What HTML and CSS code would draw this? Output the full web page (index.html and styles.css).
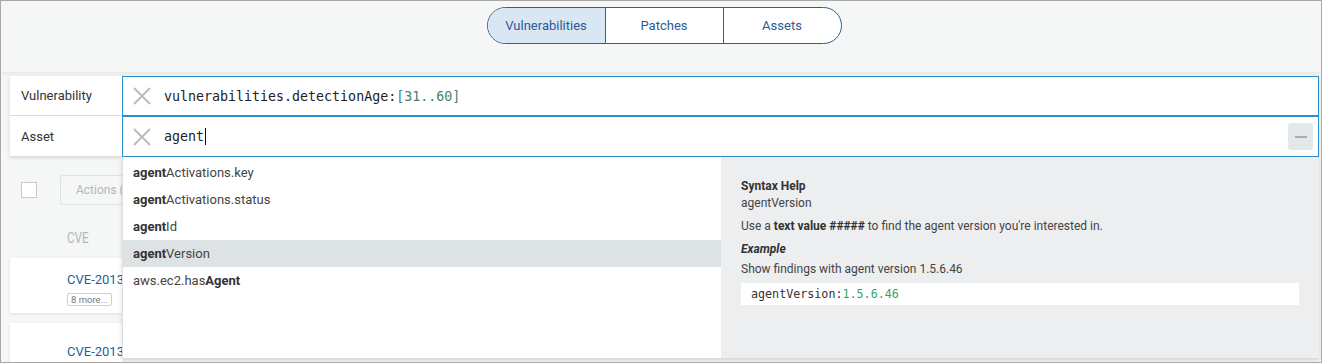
FILE: index.html
```html
<!DOCTYPE html>
<html lang="en">
<head>
    <meta charset="UTF-8">
    <meta name="viewport" content="width=device-width, initial-scale=1.0">
    <title>Vulnerabilities</title>
    <link rel="stylesheet" href="styles.css">
</head>
<body>
    <div class="frame">
        <header class="topbar">
            <nav class="segments">
                <a class="seg active">Vulnerabilities</a>
                <a class="seg">Patches</a>
                <a class="seg">Assets</a>
            </nav>
        </header>

        <section class="search">
            <div class="query-row first">
                <div class="query-label">Vulnerability</div>
                <div class="query-input">
                    <svg class="clear-icon" width="18" height="18" viewBox="0 0 18 18"><path d="M1 1L17 17M17 1L1 17" stroke="#b8bdc1" stroke-width="2" fill="none"/></svg>
                    <span class="code">vulnerabilities.detectionAge:<span class="range">[31..60]</span></span>
                </div>
            </div>
            <div class="query-row">
                <div class="query-label">Asset</div>
                <div class="query-input">
                    <svg class="clear-icon" width="18" height="18" viewBox="0 0 18 18"><path d="M1 1L17 17M17 1L1 17" stroke="#b8bdc1" stroke-width="2" fill="none"/></svg>
                    <span class="code">agent<span class="caret"></span></span>
                    <div class="collapse"><span></span></div>
                </div>
            </div>

            <div class="suggest">
                <ul class="suggest-list">
                    <li><b>agent</b>Activations.key</li>
                    <li><b>agent</b>Activations.status</li>
                    <li><b>agent</b>Id</li>
                    <li class="selected"><b>agent</b>Version</li>
                    <li>aws.ec2.has<b>Agent</b></li>
                </ul>
                <div class="syntax-help">
                    <div class="help-title">Syntax Help</div>
                    <div class="help-field">agentVersion</div>
                    <p class="help-text">Use a <b>text value #####</b> to find the agent version you're interested in.</p>
                    <div class="help-example">Example</div>
                    <p class="help-text tight">Show findings with agent version 1.5.6.46</p>
                    <div class="help-code">agentVersion:<span class="num">1.5.6.46</span></div>
                </div>
            </div>
        </section>

        <main class="results">
            <div class="toolbar">
                <span class="checkbox"></span>
                <div class="actions-btn">Actions (0)</div>
            </div>
            <div class="col-head">CVE</div>
            <div class="card">
                <a class="cve-link">CVE-2013-0001</a>
                <span class="more-tag">8 more...</span>
            </div>
            <div class="card">
                <a class="cve-link">CVE-2013-0002</a>
            </div>
        </main>
    </div>
</body>
</html>
```

FILE: styles.css
```css
body {
    margin: 0;
    font-family: Roboto, "Noto Sans", Arial, sans-serif;
    color: #333;
}
.frame {
    box-sizing: border-box;
    width: 1322px;
    height: 363px;
    border: 1px solid #a8a8a8;
    background: #f5f6f6;
    overflow: hidden;
}
.topbar {
    height: 71px;
    display: flex;
    justify-content: center;
    align-items: flex-start;
    box-shadow: 0 2px 3px rgba(0, 0, 0, 0.06);
}
.segments {
    display: flex;
    margin-top: 6px;
    margin-left: 6px;
    border: 1.5px solid #2e5f98;
    border-radius: 20px;
    overflow: hidden;
    background: #fff;
}
.seg {
    width: 117px;
    height: 35px;
    line-height: 35px;
    text-align: center;
    font-size: 13px;
    color: #2b5b94;
    border-left: 1.5px solid #2e5f98;
}
.seg:first-child {
    border-left: none;
}
.seg.active {
    background: #d9e6f4;
}

/* search box */
.search {
    position: relative;
    margin: 4px 2px 0 9px;
    box-shadow: 0 1px 4px rgba(0, 0, 0, 0.12);
}
.query-row {
    display: grid;
    grid-template-columns: 112px 1fr;
    height: 41px;
}
.query-row.first {
    height: 40px;
}
.query-label {
    background: #fff;
    font-size: 13px;
    color: #333;
    padding-left: 11px;
    display: flex;
    align-items: center;
    border-bottom: 1px solid #dcdcdc;
}
.query-input {
    box-sizing: border-box;
    background: #fff;
    border: 1px solid #2a8fc8;
    display: flex;
    align-items: center;
    padding-left: 10px;
}
.clear-icon {
    flex: none;
    margin-right: 13px;
}
.code {
    font-family: "DejaVu Sans Mono", "Liberation Mono", monospace;
    font-size: 13.3px;
    color: #222;
    display: flex;
    align-items: center;
}
.range {
    color: #4a7f6c;
}
.caret {
    display: inline-block;
    width: 1px;
    height: 17px;
    background: #111;
    margin-left: 1px;
}
.collapse {
    margin-left: auto;
    margin-right: 5px;
    width: 25px;
    height: 27px;
    border-radius: 3px;
    background: #e5e8eb;
    display: flex;
    align-items: center;
    justify-content: center;
}
.collapse span {
    width: 12px;
    height: 2px;
    background: #a9aeb3;
}

/* suggestion dropdown */
.suggest {
    position: absolute;
    top: 81px;
    left: 112px;
    right: 0;
    height: 201px;
    display: grid;
    grid-template-columns: 599px 1fr;
    background: #fff;
    box-shadow: 0 2px 4px rgba(0, 0, 0, 0.15);
    z-index: 2;
}
.suggest-list {
    list-style: none;
    margin: 0;
    padding: 2px 0 0;
    border-left: 1px solid #dde0e3;
}
.suggest-list li {
    height: 27px;
    line-height: 27px;
    padding-left: 10px;
    font-size: 13px;
    color: #444;
}
.suggest-list li b {
    color: #333;
}
.suggest-list li.selected {
    background: #dde2e5;
}
.syntax-help {
    background: #eceef0;
    padding: 22px 20px 0 20px;
    font-size: 12px;
    color: #444;
}
.help-title {
    font-weight: bold;
    color: #333;
    line-height: 15px;
}
.help-field {
    line-height: 18px;
}
.help-text {
    margin: 5px 0 0;
    line-height: 18px;
}
.help-text b {
    color: #333;
}
.help-text.tight {
    margin-top: 2px;
}
.help-example {
    margin-top: 5px;
    font-weight: bold;
    font-style: italic;
    line-height: 18px;
    color: #333;
}
.help-code {
    margin-top: 5px;
    height: 22px;
    line-height: 22px;
    background: #fff;
    padding-left: 10px;
    font-family: "DejaVu Sans Mono", "Liberation Mono", monospace;
    font-size: 11.7px;
    color: #333;
}
.help-code .num {
    color: #3aa35f;
}

/* results behind the dropdown */
.results {
    padding: 18px 2px 0 9px;
}
.toolbar {
    display: flex;
    align-items: center;
    height: 30px;
}
.checkbox {
    box-sizing: border-box;
    width: 16px;
    height: 16px;
    border: 1px solid #c4c8cc;
    background: #fff;
    margin-left: 11px;
}
.actions-btn {
    box-sizing: border-box;
    height: 30px;
    width: 110px;
    margin-left: 23px;
    border: 1px solid #dfe2e5;
    border-radius: 2px;
    padding-left: 15px;
    line-height: 28px;
    font-size: 12px;
    color: #b2b6ba;
}
.col-head {
    margin: 24px 0 0 57px;
    height: 29px;
    font-size: 15px;
    color: #b2b7bb;
    transform: scaleX(0.78);
    transform-origin: left;
}
.card {
    width: 113px;
    height: 55px;
    overflow: hidden;
    white-space: nowrap;
    background: #fff;
    box-shadow: 0 1px 3px rgba(0, 0, 0, 0.1);
    padding: 14px 0 0 57px;
    box-sizing: border-box;
    margin-bottom: 10px;
}
.card + .card {
    padding-top: 21px;
}
.cve-link {
    display: block;
    font-size: 13px;
    color: #1f5e9e;
    line-height: 16px;
}
.more-tag {
    display: inline-block;
    margin-top: 5px;
    border: 1px solid #ccd0d4;
    border-radius: 2px;
    padding: 0 3px;
    font-size: 9.5px;
    line-height: 11px;
    color: #777;
}
```
